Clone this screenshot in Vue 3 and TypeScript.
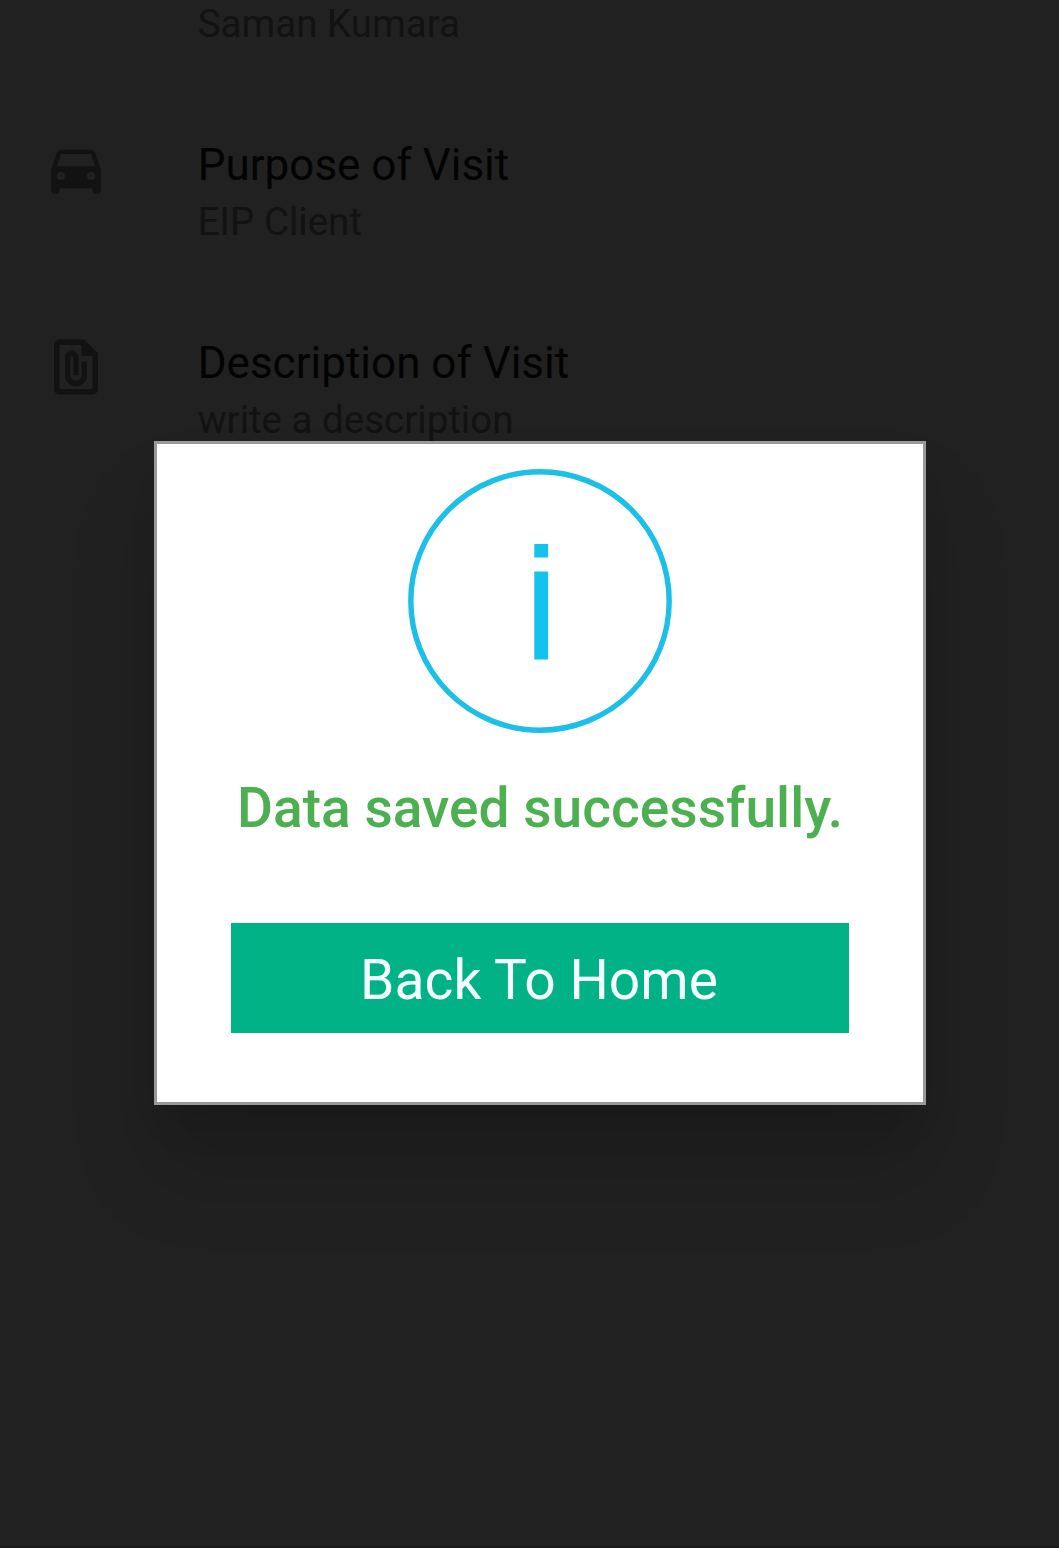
<script setup lang="ts">
interface Detail {
  title?: string
  value: string
  icon?: string
}

const details: Detail[] = [
  { value: 'Saman Kumara' },
  {
    title: 'Purpose of Visit',
    value: 'EIP Client',
    icon: 'M18.92 6.01C18.72 5.42 18.16 5 17.5 5h-11c-.66 0-1.21.42-1.42 1.01L3 12v8c0 .55.45 1 1 1h1c.55 0 1-.45 1-1v-1h12v1c0 .55.45 1 1 1h1c.55 0 1-.45 1-1v-8l-2.08-5.99zM6.5 16c-.83 0-1.5-.67-1.5-1.5S5.67 13 6.5 13s1.5.67 1.5 1.5S7.33 16 6.5 16zm11 0c-.83 0-1.5-.67-1.5-1.5s.67-1.5 1.5-1.5 1.5.67 1.5 1.5-.67 1.5-1.5 1.5zM5 11l1.5-4.5h11L19 11H5z',
  },
  {
    title: 'Description of Visit',
    value: 'write a description',
    icon: 'M15 2H6c-1.1 0-2 .9-2 2v16c0 1.1.9 2 2 2h12c1.1 0 2-.9 2-2V7l-5-5zM6 20V4h8v4h4v12H6zm10-10v5c0 2.21-1.79 4-4 4s-4-1.79-4-4V8.5c0-1.47 1.26-2.64 2.76-2.49 1.3.13 2.24 1.32 2.24 2.63V15h-2V8.5c0-.28-.22-.5-.5-.5s-.5.22-.5.5V15c0 1.1.9 2 2 2s2-.9 2-2v-5h2z',
  },
]
</script>

<template>
  <main class="screen">
    <ul class="details">
      <li v-for="item in details" :key="item.value" class="detail">
        <div class="lead">
          <svg v-if="item.icon" viewBox="0 0 24 24" class="lead-icon"><path :d="item.icon" /></svg>
        </div>
        <div class="copy">
          <div class="title">{{ item.title }}</div>
          <div class="value"><span>{{ item.value }}</span></div>
        </div>
      </li>
    </ul>

    <div class="overlay">
      <section class="dialog" role="dialog">
        <svg class="info" viewBox="0 0 264 264">
          <circle cx="132" cy="132" r="129.2" fill="none" stroke="#1cbfe8" stroke-width="5.4" />
          <rect x="126.3" y="75" width="13.8" height="13.5" fill="#14c3ed" />
          <rect x="126.3" y="102.5" width="13.8" height="88" fill="#14c3ed" />
        </svg>
        <h1 class="message"><span>Data saved successfully.</span></h1>
        <button class="home" type="button"><span>Back To Home</span></button>
      </section>
    </div>
  </main>
</template>

<style>
body {
  margin: 0;
  background: #212121;
}
</style>

<style scoped>
.screen {
  position: relative;
  height: 1548px;
  overflow: hidden;
  background: #212121;
  box-shadow: inset 0 -2px #1e191b;
  font-family: Roboto, "Liberation Sans", sans-serif;
}
.details {
  list-style: none;
  margin: -62px 0 0;
  padding: 0;
}
.detail {
  display: flex;
  height: 198px;
}
.lead {
  width: 197.7px;
}
.lead-icon {
  display: block;
  width: 66px;
  height: 66px;
  margin: 0 0 0 43px;
  fill: #121212;
}
.title {
  height: 58px;
  font-size: 44px;
  line-height: 58px;
  color: #030303;
  white-space: nowrap;
}
.value {
  height: 56px;
  font-size: 38.5px;
  line-height: 56px;
  color: #121212;
  white-space: nowrap;
}
.overlay {
  position: absolute;
  inset: 0;
  padding: 441px 0 0 154px;
}
.dialog {
  box-sizing: border-box;
  width: 772px;
  height: 664px;
  border: 3px solid #999;
  background: #fff;
  display: flex;
  flex-direction: column;
  align-items: center;
  box-shadow: 0 66px 80px 0 rgba(0, 0, 0, 0.15), 0 30px 41px -19px rgba(0, 0, 0, 0.14);
}
.info {
  width: 264px;
  height: 264px;
  margin-top: 25px;
  flex: none;
}
.message {
  margin: 42px 0 0;
  height: 66px;
  line-height: 66px;
  font-size: 55.1px;
  font-weight: 500;
  color: #4caf50;
  white-space: nowrap;
}
.home {
  width: 618px;
  height: 110px;
  margin: 82px 0 0;
  padding: 4px 2px 0 0;
  border: 0;
  background: #02b287;
  color: #f4ffff;
  font: 400 55.2px/106px Roboto, "Liberation Sans", sans-serif;
}
</style>
